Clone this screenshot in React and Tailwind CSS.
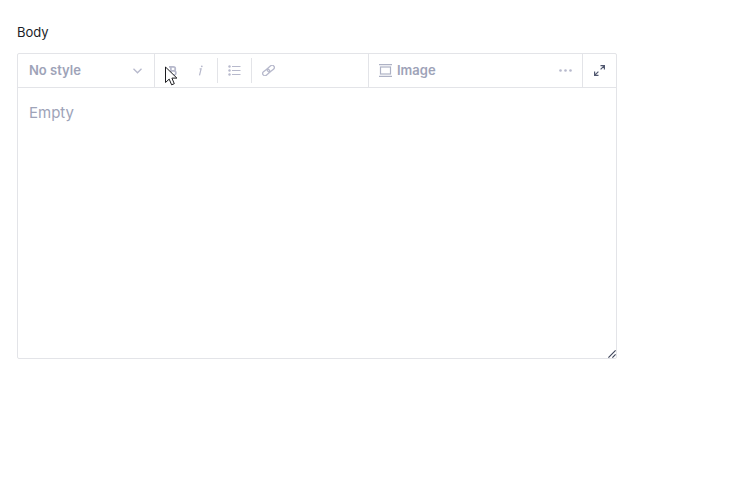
const ChevronIcon = () => (
    <svg width="9" height="6" viewBox="0 0 9 6" fill="none" stroke="currentColor" strokeWidth="1.3">
        <path d="M0.5 0.8L4.5 4.8L8.5 0.8" />
    </svg>
);

const BoldIcon = () => (
    <svg width="8" height="10" viewBox="0 0 8 10" fill="none" stroke="currentColor" strokeWidth="1.7">
        <path d="M0 0.9H4.3a2 2 0 0 1 0 4H1.8M1.8 4.9h3a2.1 2.1 0 0 1 0 4.2H0M1.9 0.9v8.2" />
    </svg>
);

const ItalicIcon = () => (
    <svg width="5" height="11" viewBox="0 0 5 11" fill="none" stroke="currentColor" strokeWidth="1.2">
        <path d="M1.6 3.9H3.1L1.5 10.3" />
        <circle cx="3.8" cy="1.3" r="0.9" fill="currentColor" stroke="none" />
    </svg>
);

const ListIcon = () => (
    <svg width="13" height="11" viewBox="0 0 13 11" fill="currentColor">
        <path d="M4 1h8.5v1H4zM4 5h8.5v1H4zM4 9h8.5v1H4z" />
        <circle cx="1.5" cy="1.5" r="1.2" />
        <circle cx="1.5" cy="5.5" r="1.2" />
        <circle cx="1.5" cy="9.5" r="1.2" />
    </svg>
);

const LinkIcon = () => (
    <svg width="13" height="11" viewBox="0 0 13 11" fill="none" stroke="currentColor" strokeWidth="1.3">
        <g transform="rotate(-40 6.5 5.5)">
            <rect x="-0.4" y="3.3" width="7.8" height="4.4" rx="2.2" />
            <rect x="5.6" y="3.3" width="7.8" height="4.4" rx="2.2" />
        </g>
    </svg>
);

const BlockImageIcon = () => (
    <svg width="13" height="13" viewBox="0 0 13 13" fill="none" stroke="#aeb2c5" strokeWidth="1.2">
        <path d="M0 0.6h13M0 12.4h13" />
        <rect x="1.5" y="3" width="10" height="7" />
    </svg>
);

const DotsIcon = () => (
    <svg width="13" height="3" viewBox="0 0 13 3" fill="currentColor">
        <circle cx="1.5" cy="1.5" r="1.3" />
        <circle cx="6.5" cy="1.5" r="1.3" />
        <circle cx="11.5" cy="1.5" r="1.3" />
    </svg>
);

const ExpandIcon = () => (
    <svg width="11" height="11" viewBox="0 0 11 11" fill="none" stroke="currentColor" strokeWidth="1.2">
        <path d="M6.5 0.6h3.9v3.9M10.2 0.8L6.6 4.4M4.5 10.4H0.6V6.5M0.8 10.2L4.4 6.6" />
    </svg>
);

const ResizeIcon = () => (
    <svg width="8" height="8" viewBox="0 0 8 8" fill="none" stroke="currentColor" strokeWidth="1.2">
        <path d="M0.4 7.6L7.6 0.4M4.4 7.6L7.6 4.4" />
    </svg>
);

const PointerIcon = () => (
    <svg width="13" height="20" viewBox="0 0 13 20" fill="white" stroke="#1b1b1f" strokeWidth="1">
        <path d="M0.5 1V16.5L4.2 13.1L6.6 18.8L9.3 17.7L6.9 12.1H11.9Z" />
    </svg>
);

function ToolButton({ label, className = "", children }) {
    return (
        <button
            type="button"
            aria-label={label}
            className={`flex items-center justify-center text-[#b7b9cc] ${className}`}
        >
            {children}
        </button>
    );
}

function Toolbar() {
    return (
        <div className="flex h-[34px] items-stretch border-b border-[#e3e4e8] text-[#9ea3b8]">
            <div className="relative w-[137px] shrink-0 border-r border-[#e3e4e8]">
                <select
                    aria-label="Text style"
                    className="h-full w-full appearance-none bg-transparent pl-[11px] text-[13px] font-semibold outline-none"
                >
                    <option>No style</option>
                </select>
                <span className="pointer-events-none absolute inset-y-0 right-3 flex items-center text-[#b7b9cc]">
                    <ChevronIcon />
                </span>
            </div>

            <div className="grid flex-1 grid-cols-2">
                <div className="flex border-r border-[#e3e4e8]">
                    <div className="relative flex">
                        <ToolButton label="Bold" className="w-[33px] pl-0.5">
                            <BoldIcon />
                        </ToolButton>
                        <span className="pointer-events-none absolute top-3 left-2.5 z-10">
                            <PointerIcon />
                        </span>
                    </div>
                    <ToolButton label="Italic" className="w-[29px] pr-1">
                        <ItalicIcon />
                    </ToolButton>
                    <ToolButton label="Bulleted list" className="my-1 w-[35px] border-x border-[#e3e4e8]">
                        <ListIcon />
                    </ToolButton>
                    <ToolButton label="Link" className="w-[33px]">
                        <LinkIcon />
                    </ToolButton>
                </div>

                <div className="flex items-center justify-between border-r border-[#e3e4e8] px-2.5">
                    <button type="button" className="flex items-center gap-[5px] text-[13px] font-semibold">
                        <BlockImageIcon />
                        Image
                    </button>
                    <ToolButton label="More">
                        <DotsIcon />
                    </ToolButton>
                </div>
            </div>

            <button
                type="button"
                aria-label="Expand editor"
                className="flex w-[33px] shrink-0 items-center justify-center text-[#515870]"
            >
                <ExpandIcon />
            </button>
        </div>
    );
}

function App() {
    return (
        <main className="bg-white p-4 pt-6 pl-[17px] font-['Inter','Liberation_Sans',sans-serif]">
            <label htmlFor="body" className="block text-[13px] leading-4 text-[#1b1d27]">
                Body
            </label>
            <div className="mt-[13px] w-full max-w-[600px] rounded-xs border border-[#e3e4e8]">
                <Toolbar />
                <div className="relative">
                    <textarea
                        id="body"
                        placeholder="Empty"
                        className="block h-[270px] w-full resize-none px-[11px] py-[13px] text-[15px] leading-6 outline-none placeholder:text-[#9ea3b8]"
                    />
                    <span className="pointer-events-none absolute right-0 bottom-0 text-[#41475c]">
                        <ResizeIcon />
                    </span>
                </div>
            </div>
        </main>
    );
}

export default App;
